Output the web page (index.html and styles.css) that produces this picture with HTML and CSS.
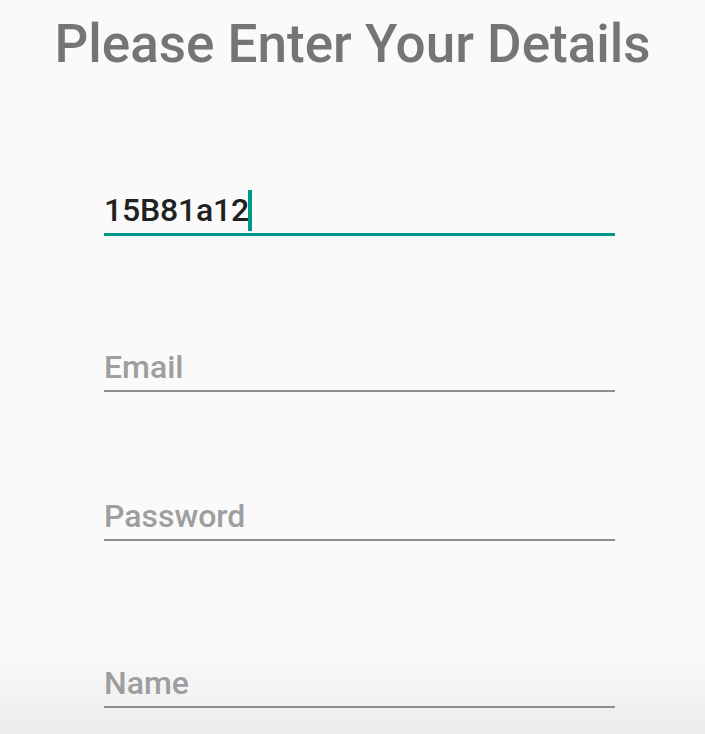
FILE: index.html
```html
<!DOCTYPE html>
<html>
<head>
<meta charset="utf-8">
<link rel="stylesheet" href="styles.css">
</head>
<body>
<div class="page">
  <div class="bottom-shade"></div>
  <h1 class="title">Please Enter Your Details</h1>
  <div class="form">
    <div class="field field-active field-id"><span class="value">15B81a12</span><span class="cursor"></span></div>
    <div class="field field-email"><span class="hint">Email</span></div>
    <div class="field field-password"><span class="hint">Password</span></div>
    <div class="field field-name"><span class="hint">Name</span></div>
  </div>
</div>
</body>
</html>
```
FILE: styles.css
```css
html, body {
  margin: 0;
  padding: 0;
  background: #fafafa;
}
.page {
  width: 705px;
  height: 734px;
  overflow: hidden;
  position: relative;
  font-family: Roboto, "Liberation Sans", sans-serif;
}
.title {
  position: relative;
  margin: 12px 0 0 0;
  font-size: 53px;
  font-weight: 500;
  line-height: 64px;
  color: #757575;
  text-align: center;
}
.form {
  position: relative;
  margin-left: 104px;
  width: 511px;
  display: flex;
  flex-direction: column;
}
.field {
  height: 40px;
  line-height: 40px;
  font-size: 32px;
  font-weight: 500;
  padding-bottom: 3px;
  border-bottom: 2px solid #8e8e8e;
  display: flex;
  align-items: center;
}
.field-active {
  border-bottom: 3px solid #009688;
}
.field-id { margin-top: 114px; }
.field-email { margin-top: 111px; }
.field-password { margin-top: 104px; }
.field-name { margin-top: 122px; }
.value {
  color: #212121;
  letter-spacing: -0.2px;
}
.hint {
  color: #9e9e9e;
}
.cursor {
  display: inline-block;
  width: 4px;
  height: 41px;
  margin-left: -1px;
  background: #009688;
}
.bottom-shade {
  position: absolute;
  left: 0;
  right: 0;
  bottom: 0;
  height: 80px;
  background: linear-gradient(to bottom, #fafafa 0%, #ececec 100%);
}
```
